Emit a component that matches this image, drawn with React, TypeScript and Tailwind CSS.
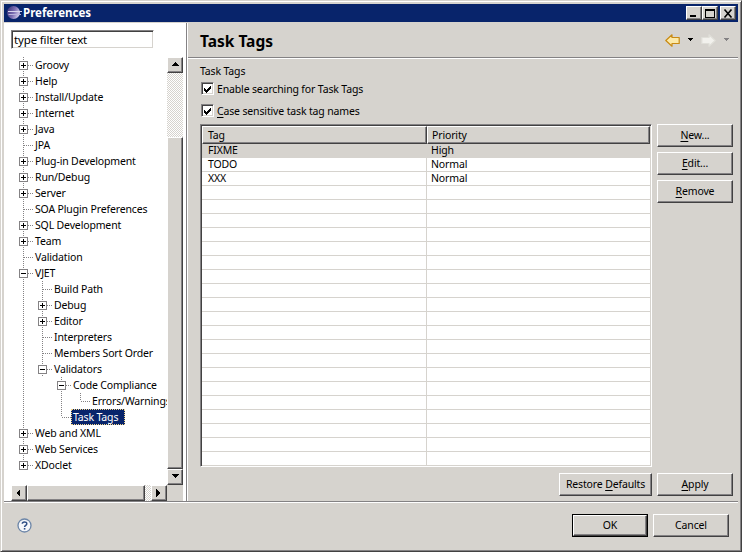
import React from 'react';

type Cell = 'blank' | 'line' | 'tee' | 'elbow' | 'teePlus' | 'teeMinus' | 'elbowPlus';

const outset = 'border border-solid border-t-white border-l-white border-r-[#424142] border-b-[#424142] shadow-[inset_-1px_-1px_0_#848284] bg-[#d6d3ce]';
const sunken = 'border border-solid border-t-[#848284] border-l-[#848284] border-r-white border-b-white shadow-[inset_1px_1px_0_#424142,inset_-1px_-1px_0_#d6d3ce]';
const dither = 'bg-[repeating-conic-gradient(#ffffff_0%_25%,#d6d3ce_0%_50%)] bg-[length:2px_2px]';

const treeRows: { cells: Cell[]; label: string; selected?: boolean }[] = [
  { cells: ['teePlus'], label: 'Groovy' },
  { cells: ['teePlus'], label: 'Help' },
  { cells: ['teePlus'], label: 'Install/Update' },
  { cells: ['teePlus'], label: 'Internet' },
  { cells: ['teePlus'], label: 'Java' },
  { cells: ['tee'], label: 'JPA' },
  { cells: ['teePlus'], label: 'Plug-in Development' },
  { cells: ['teePlus'], label: 'Run/Debug' },
  { cells: ['teePlus'], label: 'Server' },
  { cells: ['tee'], label: 'SOA Plugin Preferences' },
  { cells: ['teePlus'], label: 'SQL Development' },
  { cells: ['teePlus'], label: 'Team' },
  { cells: ['tee'], label: 'Validation' },
  { cells: ['teeMinus'], label: 'VJET' },
  { cells: ['line', 'tee'], label: 'Build Path' },
  { cells: ['line', 'teePlus'], label: 'Debug' },
  { cells: ['line', 'teePlus'], label: 'Editor' },
  { cells: ['line', 'tee'], label: 'Interpreters' },
  { cells: ['line', 'tee'], label: 'Members Sort Order' },
  { cells: ['line', 'teeMinus'], label: 'Validators' },
  { cells: ['line', 'blank', 'teeMinus'], label: 'Code Compliance' },
  { cells: ['line', 'blank', 'line', 'elbow'], label: 'Errors/Warnings' },
  { cells: ['line', 'blank', 'elbow'], label: 'Task Tags', selected: true },
  { cells: ['teePlus'], label: 'Web and XML' },
  { cells: ['teePlus'], label: 'Web Services' },
  { cells: ['elbowPlus'], label: 'XDoclet' },
];

const tableRows = [
  ['FIXME', 'High'],
  ['TODO', 'Normal'],
  ['XXX', 'Normal'],
  ...Array.from({ length: 20 }, () => ['', '']),
];

function TreeCell({ cell }: { cell: Cell }) {
  const hasBox = cell === 'teePlus' || cell === 'teeMinus' || cell === 'elbowPlus';
  const up = cell !== 'blank';
  const down = cell === 'line' || cell === 'tee' || cell === 'teePlus' || cell === 'teeMinus';
  const across = cell !== 'blank' && cell !== 'line';
  return (
    <svg width="19" height="16" className="shrink-0 block" shapeRendering="crispEdges">
      {up && <path d="M9.5 0V8" stroke="#848284" strokeDasharray="1 1" />}
      {down && <path d="M9.5 8V16" stroke="#848284" strokeDasharray="1 1" />}
      {across && <path d="M10 8.5H19" stroke="#848284" strokeDasharray="1 1" />}
      {hasBox && (
        <>
          <rect x="5.5" y="4.5" width="8" height="8" fill="#fff" stroke="#848284" />
          <path d="M7 8.5H12" stroke="#000" />
          {cell !== 'teeMinus' && <path d="M9.5 6V11" stroke="#000" />}
        </>
      )}
    </svg>
  );
}

function Underlined({ text, index }: { text: string; index: number }) {
  return (
    <span className="whitespace-pre">
      {text.slice(0, index)}
      <span className="underline underline-offset-2">{text[index]}</span>
      {text.slice(index + 1)}
    </span>
  );
}

function Button({ className, children }: { className: string; children: React.ReactNode }) {
  return <button className={`${outset} h-[23px] pb-[2px] flex items-center justify-center shrink-0 ${className}`}>{children}</button>;
}

function CheckRow({ children }: { children: React.ReactNode }) {
  return (
    <div className="flex items-center h-[13px] pl-[1px] gap-[3px]">
      <span className={`${sunken} w-[13px] h-[13px] bg-white block shrink-0`}>
        <svg width="11" height="11" viewBox="0 0 11 11" className="block" shapeRendering="crispEdges">
          <path d="M1 4h1v1h1v1h1v-1h1v-1h1v-1h1v-1h1v3h-1v1h-1v1h-1v1h-1v1h-1v-1h-1v-1h-1z" transform="translate(0.5 0.5)" fill="#000" />
        </svg>
      </span>
      <span>{children}</span>
    </div>
  );
}

function EclipseIcon() {
  return (
    <svg width="16" height="16" viewBox="0 0 16 16" className="shrink-0">
      <defs>
        <linearGradient id="ecl" x1="0" y1="0.2" x2="1" y2="0.6">
          <stop offset="0" stopColor="#3a3278" />
          <stop offset="0.55" stopColor="#7d6fb4" />
          <stop offset="1" stopColor="#d8d0ee" />
        </linearGradient>
      </defs>
      <circle cx="6.5" cy="7.5" r="6.5" fill="url(#ecl)" />
      <path d="M1 6.5H15" stroke="#d9d6ee" strokeWidth="1" />
      <path d="M1.5 9.5H14" stroke="#b9b3dc" strokeWidth="1" />
    </svg>
  );
}

function ArrowIcon({ enabled, flip }: { enabled: boolean; flip?: boolean }) {
  return (
    <svg width="15" height="13" viewBox="0 0 15 13" className={flip ? 'scale-x-[-1]' : ''}>
      <path
        d="M0.8 6.5L7 0.8V3.5H14.2V9.5H7V12.2Z"
        fill={enabled ? '#fce9a8' : '#f2f1ed'}
        stroke={enabled ? '#c98a12' : '#e0dfd9'}
        strokeWidth="1.2"
        strokeLinejoin="round"
      />
    </svg>
  );
}

function SmallDown({ color }: { color: string }) {
  return (
    <svg width="5" height="4" viewBox="0 0 5 4" shapeRendering="crispEdges" className="block">
      <path d="M0 0H5V1H4V2H3V3H2V2H1V1H0Z" fill={color} />
    </svg>
  );
}

function HelpIcon() {
  return (
    <svg width="15" height="15" viewBox="0 0 15 15">
      <circle cx="7.5" cy="7.5" r="6.5" fill="#f4f6fa" stroke="#6d86a8" strokeWidth="1.3" />
      <path d="M5.3 5.8C5.3 3.4 9.8 3.3 9.8 5.7C9.8 7.3 7.6 7.3 7.6 9" fill="none" stroke="#2f4f86" strokeWidth="1.5" />
      <rect x="6.8" y="10" width="1.6" height="1.6" fill="#2f4f86" />
    </svg>
  );
}

function CaptionButton({ children, className }: { children: React.ReactNode; className?: string }) {
  return <div className={`${outset} w-[16px] h-[14px] flex items-center justify-center ${className ?? ''}`}>{children}</div>;
}

function Triangle({ dir }: { dir: 'up' | 'down' | 'left' | 'right' }) {
  const d = { up: 'M4 1L8 5H0Z', down: 'M4 5L0 1H8Z', left: 'M1 4L5 0V8Z', right: 'M5 4L1 0V8Z' }[dir];
  return (
    <svg width="8" height="8" viewBox="0 0 8 8" shapeRendering="crispEdges" className="block">
      <path d={d} fill="#000" />
    </svg>
  );
}

export default function App() {
  return (
    <div className="w-[742px] h-[552px] flex flex-col bg-[#d6d3ce] text-black text-[10.5px] leading-[14px] tracking-[-0.15px] font-['Noto_Sans',sans-serif] overflow-hidden p-[3px] pb-[2px] border border-solid border-t-[#d6d3ce] border-l-[#d6d3ce] border-r-[#424142] border-b-[#424142] shadow-[inset_1px_1px_0_#ffffff,inset_-1px_-1px_0_#848284]">
      {/* title bar */}
      <div className="h-[18px] shrink-0 bg-[#08246b] flex items-center pl-[3px] pr-[2px] text-white font-bold">
        <EclipseIcon />
        <span className="text-[11.5px] tracking-normal">Preferences</span>
        <div className="ml-auto flex items-center">
          <CaptionButton>
            <span className="block w-[6px] h-[2px] bg-black mt-[6px] mr-[3px]" />
          </CaptionButton>
          <CaptionButton>
            <span className="block w-[10px] h-[9px] border border-solid border-black border-t-2" />
          </CaptionButton>
          <CaptionButton className="ml-[2px]">
            <svg width="10" height="9" viewBox="0 0 10 9">
              <path d="M1.5 0.5L8.5 8.5M8.5 0.5L1.5 8.5" stroke="#000" strokeWidth="1.6" />
            </svg>
          </CaptionButton>
        </div>
      </div>

      {/* main area */}
      <div className="flex mt-[1px] h-[478px] shrink-0">
        {/* left pane */}
        <div className="w-[182px] shrink-0 bg-white flex flex-col pl-[7px] pr-[3px]">
          <div className={`${sunken} mt-[7px] w-[143px] h-[19px] bg-white pl-[2px] flex items-center text-[11.5px]`}>type filter text</div>
          <div className="flex mt-[8px] h-[428px]">
            <div className="w-[156px] overflow-hidden whitespace-nowrap">
              {treeRows.map((row) => (
                <div key={row.label} className="flex h-[16px] items-center pl-[3px]">
                  {row.cells.map((c, i) => (
                    <TreeCell key={i} cell={c} />
                  ))}
                  <span
                    className={
                      row.selected
                        ? 'bg-[#08246b] text-white h-[16px] leading-[14px] pl-[1px] pr-[6px] border border-dotted border-[#f4d78a]'
                        : 'pl-[2px]'
                    }
                  >
                    {row.label}
                  </span>
                </div>
              ))}
            </div>
            <div className="w-[16px] h-[428px] flex flex-col">
              <div className={`${outset} h-[16px] flex items-center justify-center`}>
                <Triangle dir="up" />
              </div>
              <div className={`h-[64px] ${dither}`} />
              <div className={`${outset} flex-1`} />
              <div className={`${outset} h-[16px] flex items-center justify-center`}>
                <Triangle dir="down" />
              </div>
            </div>
          </div>
          <div className="flex h-[16px] w-[172px]">
            <div className={`${outset} w-[16px] flex items-center justify-center`}>
              <Triangle dir="left" />
            </div>
            <div className={`${outset} w-[118px]`} />
            <div className={`w-[6px] ${dither}`} />
            <div className={`${outset} w-[16px] flex items-center justify-center`}>
              <Triangle dir="right" />
            </div>
            <div className="w-[16px] bg-[#d6d3ce]" />
          </div>
        </div>

        {/* right pane */}
        <div className="flex-1 flex flex-col border-l border-solid border-[#848284] shadow-[inset_1px_0_0_#ffffff]">
          <div className="h-[34px] shrink-0 flex items-center pl-[13px] pr-[9px]">
            <span className="text-[15.5px] font-bold tracking-normal mt-[1px]">Task Tags</span>
            <div className="ml-auto flex items-center">
              <ArrowIcon enabled />
              <span className="mx-[8px]"><SmallDown color="#000" /></span>
              <ArrowIcon enabled={false} flip />
              <span className="ml-[8px]"><SmallDown color="#848284" /></span>
            </div>
          </div>
          <div className="h-[2px] shrink-0 ml-[1px] bg-white border-t border-solid border-[#848284]" />
          <div className="pl-[13px] pr-[5px] flex flex-col flex-1">
            <div className="mt-[5px] h-[14px]">Task Tags</div>
            <div className="mt-[4px] flex flex-col gap-[9px]">
              <CheckRow>Enable searching for Task Tags</CheckRow>
              <CheckRow><Underlined text="Case sensitive task tag names" index={0} /></CheckRow>
            </div>
            <div className="mt-[7px] flex gap-[5px]">
              <div className={`${sunken} w-[452px] h-[343px] bg-white p-[1px] flex flex-col overflow-hidden`}>
                <div className="grid grid-cols-[225px_1fr] h-[18px] shrink-0">
                  <div className={`${outset} pl-[5px] flex items-center`}>Tag</div>
                  <div className={`${outset} pl-[4px] flex items-center`}>Priority</div>
                </div>
                {tableRows.map((r, i) => (
                  <div
                    key={i}
                    className={`grid grid-cols-[225px_1fr] h-[14px] shrink-0 border-b border-solid border-[#d6d3ce] ${i === 0 ? 'bg-[#d6d3ce]' : ''}`}
                  >
                    <div className="pl-[6px] border-r border-solid border-[#d6d3ce] leading-[13px]">{r[0]}</div>
                    <div className="pl-[4px] leading-[13px]">{r[1]}</div>
                  </div>
                ))}
              </div>
              <div className="flex flex-col gap-[5px]">
                <Button className="w-[76px]"><Underlined text="New..." index={0} /></Button>
                <Button className="w-[76px]"><Underlined text="Edit..." index={0} /></Button>
                <Button className="w-[76px]"><Underlined text="Remove" index={0} /></Button>
              </div>
            </div>
            <div className="mt-[6px] flex justify-end gap-[5px]">
              <Button className="w-[93px]"><Underlined text="Restore Defaults" index={8} /></Button>
              <Button className="w-[76px]"><Underlined text="Apply" index={0} /></Button>
            </div>
          </div>
        </div>
      </div>

      <div className="h-[2px] shrink-0 bg-white border-t border-solid border-[#848284]" />

      {/* bottom bar */}
      <div className="flex-1 flex items-start pl-[13px] pr-[9px] pt-[11px]">
        <div className="mt-[4px]">
          <HelpIcon />
        </div>
        <div className="ml-auto flex gap-[5px]">
          <div className="border border-solid border-black">
            <Button className="w-[74px] !h-[21px]">OK</Button>
          </div>
          <Button className="w-[76px]">Cancel</Button>
        </div>
      </div>
    </div>
  );
}
